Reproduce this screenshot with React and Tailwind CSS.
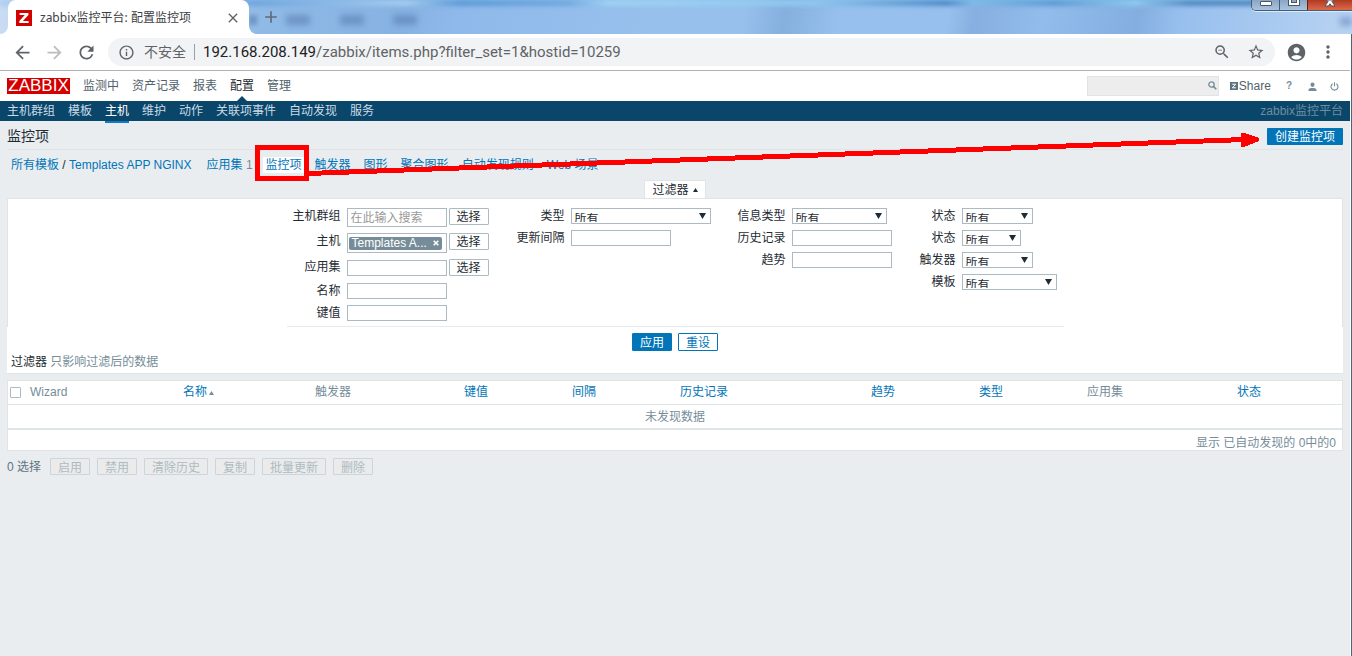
import React from "react";
import {
  MdArrowBack,
  MdArrowForward,
  MdRefresh,
  MdInfoOutline,
  MdZoomOut,
  MdStarBorder,
  MdAccountCircle,
  MdMoreVert,
  MdAdd,
  MdClose,
} from "react-icons/md";

const SANS = "font-['Liberation_Sans','Noto_Sans_CJK_SC',sans-serif]";
const CHROME = "font-['Noto_Sans','Noto_Sans_CJK_SC',sans-serif]";

function TabStrip() {
  return (
    <div className="relative flex h-[34px] items-end overflow-hidden bg-[linear-gradient(100deg,#c9dcf3_0%,#8fb9e6_20%,#86b2e2_30%,#8fb9ea_34%,#97c0ed_48%,#97c0ed_55%,#85afdd_58%,#97c0ee_62%,#97c0ee_70%,#87b0e0_72%,#92bcec_77%,#84aedf_84%,#97bfee_87%,#b8d3f2_100%)]">
      <div className="absolute inset-x-0 top-0 h-[6px] bg-[linear-gradient(90deg,#a9cdf0_0%,#6ea5dd_19%,#a5cdf0_30%,#5a9ad6_34%,#6fa9de_42%,#9fd2f2_45%,#8fc8f0_60%,#4a8ac6_70%,#7cbcea_72%,#5a9ad2_78%,#8cccf0_84%,#4f8ac2_88%,#4f8ac2_93%,#a8cdef_100%)] blur-[2px]" />
      {[286, 340, 393].map((x) => (
        <span
          key={x}
          className="absolute top-[15px] h-[10px] w-[24px] bg-[#5f86b8] opacity-70 blur-[3px]"
          style={{ left: x }}
        />
      ))}
      <span className="absolute top-[15px] left-[249px] h-[10px] w-[8px] bg-[#5f86b8] opacity-70 blur-[2px]" />
      <span className="absolute top-[17px] right-0 h-[9px] w-[12px] bg-[#6d90c4] opacity-70 blur-[3px]" />

      <svg className="relative size-2 shrink-0" viewBox="0 0 8 8">
        <path d="M8 0v8H0a8 8 0 0 0 8-8z" fill="#fff" />
      </svg>
      <div className="relative flex h-[34px] w-[241px] items-center rounded-t-lg bg-white pt-px pr-2 pl-2">
        <svg className="size-4 shrink-0" viewBox="0 0 16 16">
          <rect width="16" height="16" fill="#d40000" />
          <path d="M3.6 3h8.8v2L6.9 11h5.7v2.1H3.3v-2L8.8 5.1H3.6z" fill="#fff" />
        </svg>
        <span className={`${CHROME} ml-2 flex-1 text-xs whitespace-nowrap text-[#3c4043]`}>
          zabbix监控平台: 配置监控项
        </span>
        <button aria-label="关闭标签页" className="text-[#5f6368]">
          <MdClose className="size-4" />
        </button>
      </div>
      <svg className="relative size-2 shrink-0" viewBox="0 0 8 8">
        <path d="M0 0v8h8a8 8 0 0 1-8-8z" fill="#fff" />
      </svg>
      <button aria-label="新标签页" className="relative mb-[7px] ml-1 text-[#5f6b7c]">
        <MdAdd className="size-5" />
      </button>

      <div className="absolute top-0 right-0 flex h-[11px] w-[101px] overflow-hidden rounded-bl-[5px] border-b border-l border-[#4b5c72] shadow-[0_1px_0_#d9ecfb]">
        <button aria-label="最小化" className="flex w-[28px] items-start justify-center border-r border-[#4b5c72] bg-linear-to-b from-[#8ba6c4] to-[#a9c4e0]">
          <span className="mt-px h-[5px] w-[12px] rounded-[1px] border border-[#4c5563] bg-white" />
        </button>
        <button aria-label="还原" className="flex w-[27px] items-start justify-center bg-linear-to-b from-[#8ba6c4] to-[#a9c4e0]">
          <span className="flex h-[6px] w-[12px] justify-center rounded-b-[1px] border border-t-0 border-[#4c5563] bg-white">
            <span className="h-[3px] w-[6px] border border-t-0 border-[#4c5563] bg-[#8ba6c4]" />
          </span>
        </button>
        <button aria-label="关闭" className="flex flex-1 items-start justify-center border-l border-[#6b1d12] bg-linear-to-b from-[#b03a22] to-[#dc6a4b]">
          <svg width="12" height="7" viewBox="0 0 12 7">
            <path d="M2.5 0h7L8 1.5 11 6H7.6L6 3.800 4.400 6H1L4 1.500z" fill="#fff" stroke="#4c5563" strokeWidth="1" />
          </svg>
        </button>
      </div>
    </div>
  );
}

function Toolbar() {
  return (
    <div className={`${CHROME} flex h-[37px] items-center gap-[11px] border-b border-[#b1b1b1] bg-white pr-3 pl-3 text-[#5f6368]`}>
      <button aria-label="后退"><MdArrowBack className="size-[21px]" /></button>
      <button aria-label="前进" className="text-[#babcbe]"><MdArrowForward className="size-[21px]" /></button>
      <button aria-label="刷新"><MdRefresh className="size-[21px]" /></button>
      <div className="flex h-7 flex-1 items-center rounded-full bg-[#f1f3f4] pr-[10px] pl-[10px]">
        <MdInfoOutline className="size-[17px] shrink-0" />
        <span className="ml-[9px] text-sm whitespace-nowrap">不安全</span>
        <span className="ml-2 h-4 w-px bg-[#9aa0a6]" />
        <div className="ml-2 flex-1 font-['Roboto','Noto_Sans_CJK_SC',sans-serif] text-[15px] whitespace-nowrap">
          <span className="text-[#202124]">192.168.208.149</span>/zabbix/items.php?filter_set=1&amp;hostid=10259
        </div>
        <button aria-label="缩放"><MdZoomOut className="size-[18px]" /></button>
        <button aria-label="收藏" className="ml-4"><MdStarBorder className="size-[18px]" /></button>
      </div>
      <button aria-label="用户"><MdAccountCircle className="size-[21px]" /></button>
      <button aria-label="菜单"><MdMoreVert className="size-5" /></button>
    </div>
  );
}

function Header() {
  const items = ["监测中", "资产记录", "报表", "配置", "管理"];
  return (
    <header className="flex h-[30px] items-center bg-white pr-[11px] pl-[7px]">
      <a href="#home" className="flex h-4 w-[63px] items-center justify-center bg-[#d40000] text-[17px] leading-4 text-white">
        ZABBIX
      </a>
      <nav className="ml-[13px] flex h-full items-center gap-[13px]">
        {items.map((t) => (
          <a
            key={t}
            href="#nav"
            className={
              t === "配置"
                ? "relative flex h-full items-center text-[#1f2c33]"
                : "flex h-full items-center text-[#51626c]"
            }
          >
            {t}
            {t === "配置" && (
              <svg className="absolute bottom-0 left-1/2 h-[5px] w-[10px] -translate-x-1/2" viewBox="0 0 10 5">
                <path d="M0 5 5 0l5 5z" fill="#0a466a" />
              </svg>
            )}
          </a>
        ))}
      </nav>
      <div className="ml-auto flex items-center">
        <div className="relative">
          <input aria-label="搜索" className="block h-5 w-[132px] border border-[#dfe4e7] bg-[#ededed] pr-5 pl-1" />
          <svg className="absolute top-[5px] right-[2px] size-[9px]" viewBox="0 0 9 9" fill="none" stroke="#768d99">
            <circle cx="3.500" cy="3.500" r="2.700" strokeWidth="1.300" />
            <path d="M5.600 5.600 8.300 8.300" strokeWidth="1.600" />
          </svg>
        </div>
        <a href="#share" className="ml-[11px] flex items-center gap-px text-[#51626c]">
          <svg className="size-2" viewBox="0 0 8 8">
            <rect width="8" height="8" fill="#5b7482" />
            <path d="M2.200 2.200h3.600L2.300 5.800h3.600" fill="none" stroke="#fff" strokeWidth="1" />
          </svg>
          Share
        </a>
        <a href="#help" className="ml-[15px] text-[10px] font-bold text-[#768d99]">?</a>
        <a href="#profile" aria-label="用户资料" className="ml-4">
          <svg className="size-[9px]" viewBox="0 0 9 9" fill="#768d99">
            <path d="M4.500 0.500c1.300 0 2 .9 2 2.100S5.700 5 4.500 5s-2-1.200-2-2.400.7-2.100 2-2.100zM.5 9V7.500C1 6.300 2.800 6 4.500 6S8 6.300 8.500 7.500V9z" />
          </svg>
        </a>
        <a href="#logout" aria-label="退出" className="ml-[13px]">
          <svg className="size-[9px]" viewBox="0 0 9 9" fill="none" stroke="#768d99" strokeWidth="1.100">
            <path d="M2.600 1.700a3.500 3.500 0 1 0 3.800 0M4.500 0.300v4" />
          </svg>
        </a>
      </div>
    </header>
  );
}

function SubNav() {
  const items = ["主机群组", "模板", "主机", "维护", "动作", "关联项事件", "自动发现", "服务"];
  return (
    <nav className="flex h-5 items-center gap-[13px] bg-[#0a466a] px-[7px] text-[#c9dbe6]">
      {items.map((t) => (
        <a
          key={t}
          href="#sub"
          className={
            t === "主机"
              ? "relative flex h-full items-center text-white after:absolute after:inset-x-0 after:top-full after:h-[2px] after:bg-[#0f7bc2] after:content-['']"
              : ""
          }
        >
          {t}
        </a>
      ))}
      <span className="ml-auto text-[#6f8d9f]">zabbix监控平台</span>
    </nav>
  );
}

const FIELD = "h-4 border border-[#acbbc2] bg-white";

function Row({ id, label, labelWidth, height = "h-4", children }) {
  return (
    <div className={`flex items-center gap-[6px] ${height}`}>
      <label htmlFor={id} className={`${labelWidth} shrink-0 self-start text-right whitespace-nowrap`}>
        {label}
      </label>
      {children}
    </div>
  );
}

function Select({ id, width }) {
  return (
    <div className={`relative ${width}`}>
      <select id={id} className={`${FIELD} block w-full appearance-none overflow-hidden pt-1 pb-px pl-[3px] leading-3`}>
        <option>所有</option>
      </select>
      <svg className="pointer-events-none absolute top-[5px] right-[5px] h-[6px] w-[7px]" viewBox="0 0 7 6">
        <path d="M0 0h7L3.500 6z" fill="#1f2c33" />
      </svg>
    </div>
  );
}

function Pick() {
  return <button className="-ml-1 h-[17px] w-10 self-start rounded-[1px] border border-[#acbbc2] bg-white pt-px leading-[15px]">选择</button>;
}

function Filter() {
  return (
    <section>
      <div className="flex justify-center">
        <button className="flex h-[18px] items-center gap-1 border border-b-0 border-[#dfe4e7] bg-white px-[7px]">
          过滤器
          <svg className="h-1 w-[5px]" viewBox="0 0 5 4"><path d="M0 4 2.500 0 5 4z" fill="#1f2c33" /></svg>
        </button>
      </div>
      <div className="flex h-[129px] justify-center border border-b-0 border-[#dfe4e7] bg-white">
        <div className="flex w-[777px] border-b border-[#e8ebed] pt-[9px]">
          <div className="flex flex-col gap-[6px]">
            <Row id="group" label="主机群组" labelWidth="w-[54px]" height="h-[19px]">
              <input id="group" placeholder="在此输入搜索" className="h-[19px] w-[100px] border border-[#acbbc2] bg-white px-[3px] placeholder:text-[#9a9a9a]" />
              <Pick />
            </Row>
            <Row id="host" label="主机" labelWidth="w-[54px]" height="h-5">
              <div className="flex h-5 w-[100px] items-center border border-[#acbbc2] bg-white px-px">
                <button id="host" className="flex h-[13px] w-[93px] items-center justify-between rounded-[2px] bg-[#768d99] px-[3px] leading-3 whitespace-nowrap text-white">
                  Templates A...
                  <svg className="size-[6px]" viewBox="0 0 6 6"><path d="m.7.7 4.600 4.600m0-4.600L.7 5.300" stroke="#fff" strokeWidth="1.600" /></svg>
                </button>
              </div>
              <Pick />
            </Row>
            <Row id="app" label="应用集" labelWidth="w-[54px]" height="h-[18px]">
              <input id="app" className={`${FIELD} w-[100px]`} />
              <Pick />
            </Row>
            <Row id="name" label="名称" labelWidth="w-[54px]">
              <input id="name" className={`${FIELD} w-[100px]`} />
            </Row>
            <Row id="key" label="键值" labelWidth="w-[54px]">
              <input id="key" className={`${FIELD} w-[100px]`} />
            </Row>
          </div>
          <div className="flex flex-col gap-[6px]">
            <Row id="type" label="类型" labelWidth="w-[76px]"><Select id="type" width="w-[140px]" /></Row>
            <Row id="interval" label="更新间隔" labelWidth="w-[76px]"><input id="interval" className={`${FIELD} w-[100px]`} /></Row>
          </div>
          <div className="flex flex-col gap-[6px]">
            <Row id="info" label="信息类型" labelWidth="w-[75px]"><Select id="info" width="w-[95px]" /></Row>
            <Row id="history" label="历史记录" labelWidth="w-[75px]"><input id="history" className={`${FIELD} w-[100px]`} /></Row>
            <Row id="trend" label="趋势" labelWidth="w-[75px]"><input id="trend" className={`${FIELD} w-[100px]`} /></Row>
          </div>
          <div className="flex flex-col gap-[6px]">
            <Row id="state" label="状态" labelWidth="w-[64px]"><Select id="state" width="w-[71px]" /></Row>
            <Row id="status" label="状态" labelWidth="w-[64px]"><Select id="status" width="w-[59px]" /></Row>
            <Row id="trigger" label="触发器" labelWidth="w-[64px]"><Select id="trigger" width="w-[71px]" /></Row>
            <Row id="tpl" label="模板" labelWidth="w-[64px]"><Select id="tpl" width="w-[95px]" /></Row>
          </div>
        </div>
      </div>
      <div className="border-b border-[#dfe4e7] bg-white pt-[6px] pb-[3px]">
        <div className="flex justify-center gap-[6px]">
          <button className="h-[18px] w-10 rounded-[1px] border border-[#0275b8] bg-[#0275b8] pt-px leading-4 text-white">应用</button>
          <button className="h-[18px] w-10 rounded-[1px] border border-[#0275b8] bg-white pt-px leading-4 text-[#0275b8]">重设</button>
        </div>
        <p className="mt-[3px] pl-1 text-[#768d99]">
          <span className="text-[#1f2c33]">过滤器</span> 只影响过滤后的数据
        </p>
      </div>
    </section>
  );
}

const COLUMNS = [
  ["Wizard", "w-[153px]", false],
  ["名称", "w-[132px]", true],
  ["触发器", "w-[149px]", false],
  ["键值", "w-[108px]", true],
  ["间隔", "w-[108px]", true],
  ["历史记录", "w-[191px]", true],
  ["趋势", "w-[108px]", true],
  ["类型", "w-[108px]", true],
  ["应用集", "w-[150px]", false],
  ["状态", "w-[110px]", true],
];

function Items() {
  return (
    <div className="mt-[6px] border border-[#dfe4e7] bg-white">
      <table className="w-full table-fixed border-collapse text-[#768d99]">
        <thead>
          <tr className="h-[23px] border-b border-[#dfe4e7]">
            <th className="w-[17px] pl-[2px] text-left">
              <input type="checkbox" aria-label="全选" className="block size-[11px] appearance-none rounded-[1px] border border-[#acbbc2] bg-white" />
            </th>
            {COLUMNS.map(([name, width, link]) => (
              <th key={name} className={`${width} pl-[5px] text-left font-normal whitespace-nowrap`}>
                {link ? <a href="#sort" className="text-[#0275b8]">{name}</a> : name}
                {name === "名称" && (
                  <svg className="ml-[2px] inline h-1 w-[5px]" viewBox="0 0 5 4"><path d="M0 4 2.500 0 5 4z" fill="#768d99" /></svg>
                )}
              </th>
            ))}
          </tr>
        </thead>
        <tbody>
          <tr className="h-[25px] border-b-2 border-[#dfe4e7]">
            <td colSpan={11} className="pt-[2px] text-center">未发现数据</td>
          </tr>
        </tbody>
        <tfoot>
          <tr className="h-5">
            <td colSpan={11} className="pt-[6px] pr-[6px] text-right leading-[14px]">显示 已自动发现的 0中的0</td>
          </tr>
        </tfoot>
      </table>
    </div>
  );
}

function Actions() {
  return (
    <div className="mt-[7px] flex items-center gap-[7px] text-[#768d99]">
      <span className="mr-[2px] pt-[2px] leading-[15px] text-[#5f7480]">0 选择</span>
      {["启用", "禁用", "清除历史", "复制", "批量更新", "删除"].map((t) => (
        <button key={t} disabled className="h-[17px] rounded-[1px] border border-[#ccd5d9] bg-[#ebebeb] px-[7px] pt-[2px] leading-[15px] text-[#acbbc2]">
          {t}
        </button>
      ))}
    </div>
  );
}

function Crumbs() {
  return (
    <div className="flex h-[31px] items-center gap-[13px] border-t border-[#dfe4e7] pl-1 whitespace-nowrap text-[#0275b8]">
      <span className="pr-[2px] text-[#1f2c33]">
        <a href="#all" className="text-[#0275b8]">所有模板</a> / <a href="#tpl" className="text-[#0275b8]">Templates APP NGINX</a>
      </span>
      <span className="text-[#768d99]"><a href="#apps" className="text-[#0275b8]">应用集</a> 1</span>
      <a href="#items" className="-mx-[3px] bg-white px-[3px] leading-4">监控项</a>
      {["触发器", "图形", "聚合图形", "自动发现规则", "Web 场景"].map((t) => (
        <a key={t} href="#tab">{t}</a>
      ))}
    </div>
  );
}

function Annotation() {
  return (
    <svg className="pointer-events-none absolute top-0 left-0 h-[200px] w-[1352px]" viewBox="0 0 1352 200" shapeRendering="crispEdges">
      <rect x="257.500" y="147.500" width="49" height="31" fill="none" stroke="#f00" strokeWidth="5" />
      <path d="M308 173.500 1245 139.500" stroke="#f00" strokeWidth="5" />
      <path d="M1241 133v14h3l15-6v-3l-15-5z" fill="#f00" />
    </svg>
  );
}

export default function App() {
  return (
    <div className={`${SANS} relative flex min-h-screen flex-col text-xs leading-4 text-[#1f2c33]`}>
      <TabStrip />
      <div className="flex flex-1 flex-col border-r border-[#4f6478] bg-white pr-px">
        <Toolbar />
        <div className="flex flex-1 flex-col bg-[#e9edf0]">
          <Header />
          <SubNav />
          <main className="px-[7px]">
            <div className="flex h-7 items-center justify-between pt-[2px]">
              <h1 className="text-sm">监控项</h1>
              <button className="h-[17px] rounded-[1px] bg-[#0275b8] px-2 pt-px leading-4 text-white">创建监控项</button>
            </div>
            <Crumbs />
            <Filter />
            <Items />
            <Actions />
          </main>
        </div>
      </div>
      <Annotation />
    </div>
  );
}
